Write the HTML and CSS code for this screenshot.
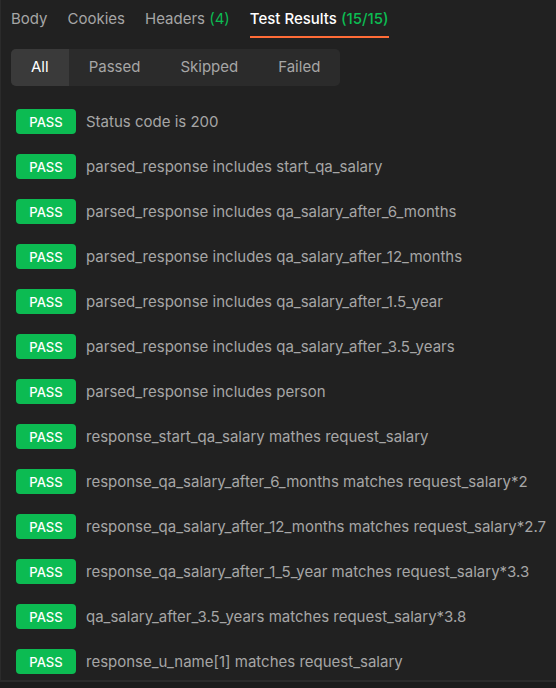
FILE: index.html
```html
<!DOCTYPE html>
<html>
<head>
<meta charset="utf-8">
<link rel="stylesheet" href="styles.css">
</head>
<body>
<div class="panel">
  <nav class="tabs">
    <span class="tab">Body</span>
    <span class="tab">Cookies</span>
    <span class="tab">Headers <span class="count">(4)</span></span>
    <span class="tab active">Test Results <span class="count">(15/15)</span></span>
  </nav>
  <div class="filters">
    <span class="seg selected">All</span>
    <span class="seg">Passed</span>
    <span class="seg">Skipped</span>
    <span class="seg">Failed</span>
  </div>
  <ul class="results">
    <li class="row"><span class="badge">PASS</span><span class="name">Status code is 200</span></li>
    <li class="row"><span class="badge">PASS</span><span class="name">parsed_response includes start_qa_salary</span></li>
    <li class="row"><span class="badge">PASS</span><span class="name">parsed_response includes qa_salary_after_6_months</span></li>
    <li class="row"><span class="badge">PASS</span><span class="name">parsed_response includes qa_salary_after_12_months</span></li>
    <li class="row"><span class="badge">PASS</span><span class="name">parsed_response includes qa_salary_after_1.5_year</span></li>
    <li class="row"><span class="badge">PASS</span><span class="name">parsed_response includes qa_salary_after_3.5_years</span></li>
    <li class="row"><span class="badge">PASS</span><span class="name">parsed_response includes person</span></li>
    <li class="row"><span class="badge">PASS</span><span class="name">response_start_qa_salary mathes request_salary</span></li>
    <li class="row"><span class="badge">PASS</span><span class="name">response_qa_salary_after_6_months matches request_salary*2</span></li>
    <li class="row"><span class="badge">PASS</span><span class="name">response_qa_salary_after_12_months matches request_salary*2.7</span></li>
    <li class="row"><span class="badge">PASS</span><span class="name">response_qa_salary_after_1_5_year matches request_salary*3.3</span></li>
    <li class="row"><span class="badge">PASS</span><span class="name">qa_salary_after_3.5_years matches request_salary*3.8</span></li>
    <li class="row"><span class="badge">PASS</span><span class="name">response_u_name[1] matches request_salary</span></li>
  </ul>
</div>
</body>
</html>
```

FILE: styles.css
```css
html, body {
  margin: 0;
  padding: 0;
  background: #1c1c1c;
}
body {
  font-family: Inter, "Noto Sans", sans-serif;
  width: 556px;
  height: 688px;
  overflow: hidden;
}
.panel {
  background: #212121;
  border-left: 1px solid #2b2b2b;
  border-bottom: 2px solid #2b2b2b;
  height: 682px;
  box-sizing: border-box;
  overflow: hidden;
}
.tabs {
  display: flex;
  gap: 20px;
  padding: 0 0 0 10px;
  height: 39px;
  box-sizing: border-box;
}
.tab {
  font-size: 15px;
  color: #a6a6a6;
  padding-top: 9px;
  height: 39px;
  box-sizing: border-box;
  white-space: nowrap;
}
.tab .count {
  color: #0cbb52;
}
.tab.active {
  color: #ffffff;
  font-weight: 500;
  border-bottom: 2px solid #ff6c37;
  height: 38px;
}
.filters {
  display: inline-flex;
  margin: 10px 0 0 10px;
  background: #2b2b2b;
  border-radius: 5px;
  height: 37px;
  overflow: hidden;
}
.seg {
  font-size: 15px;
  color: #a6a6a6;
  padding: 0 20px 1px;
  line-height: 36px;
}
.seg.selected {
  background: #3a3a3a;
  color: #ffffff;
}
.results {
  list-style: none;
  margin: 0;
  padding: 23px 0 0 15px;
  display: flex;
  flex-direction: column;
  gap: 20px;
}
.row {
  display: flex;
  align-items: center;
  gap: 10px;
  height: 25px;
}
.badge {
  width: 60px;
  height: 25px;
  background: #0cbb52;
  border-radius: 4px;
  color: #ffffff;
  font-size: 13px;
  font-weight: 500;
  display: flex;
  align-items: center;
  justify-content: center;
  flex-shrink: 0;
}
.name {
  font-size: 15px;
  color: #a6a6a6;
  white-space: nowrap;
}
```
